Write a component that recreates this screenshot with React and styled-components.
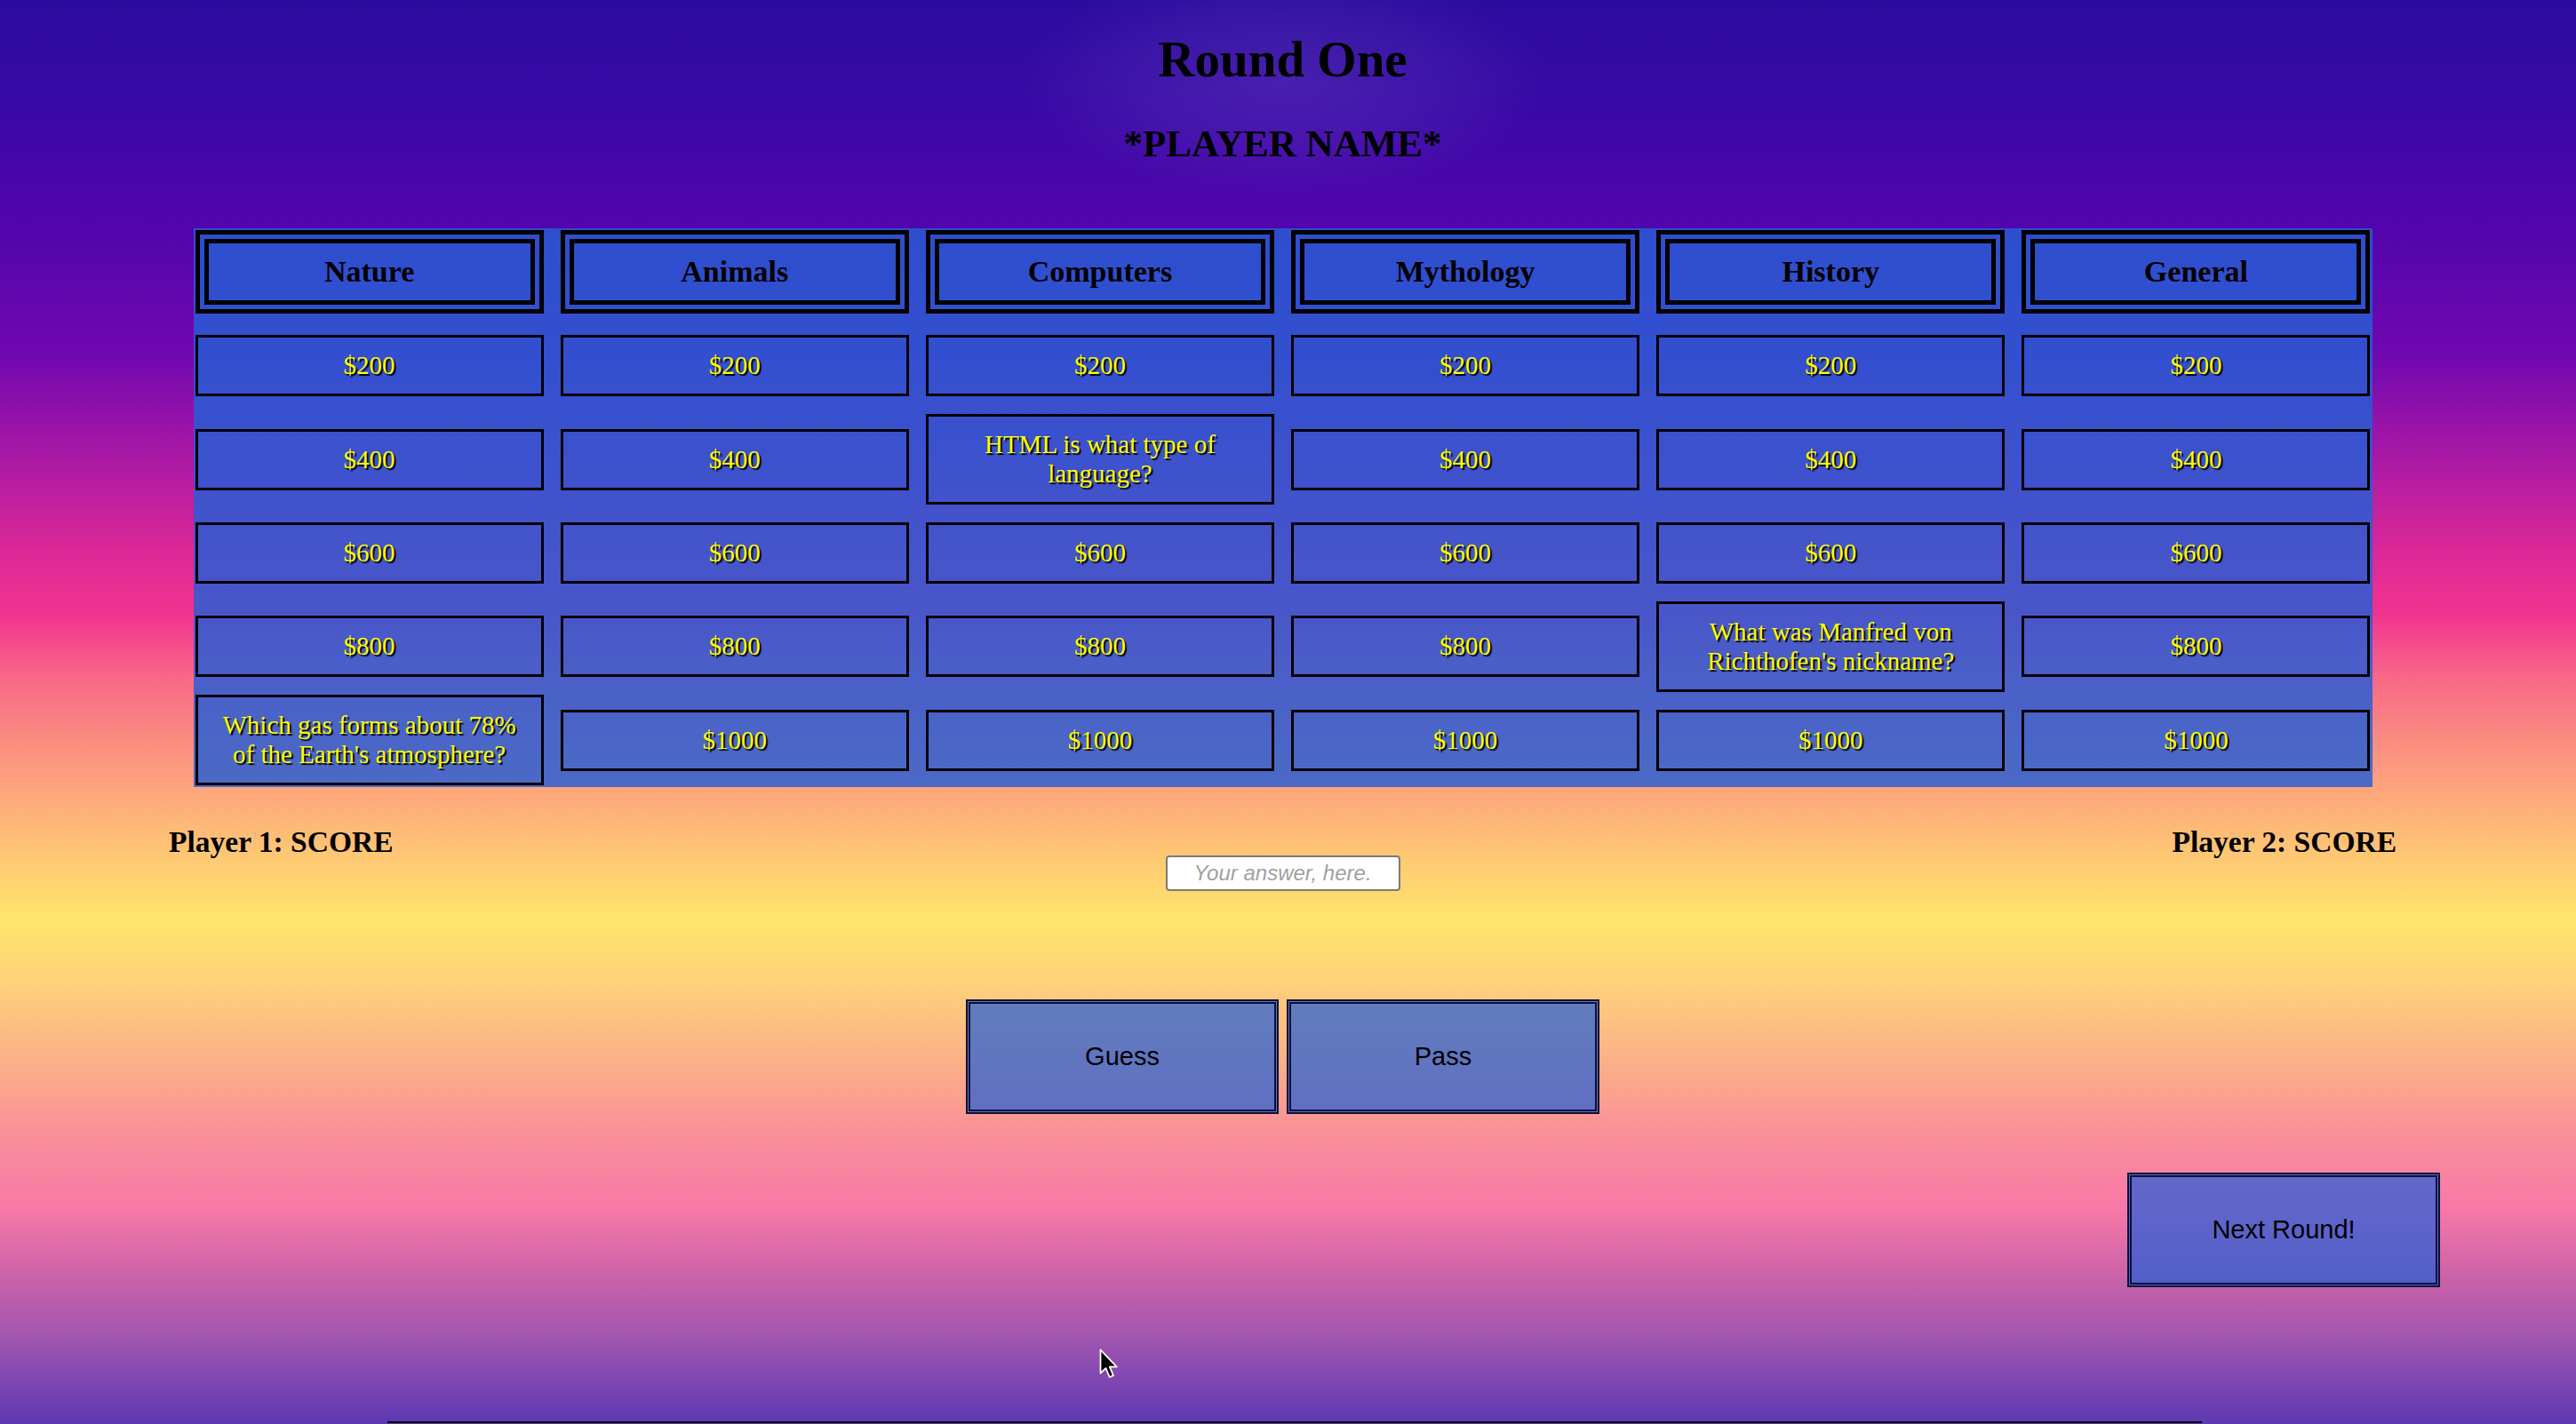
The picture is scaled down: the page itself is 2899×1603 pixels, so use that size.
import React from 'react';
import styled, { createGlobalStyle } from 'styled-components';

const GlobalStyle = createGlobalStyle`
  html, body {
    margin: 0;
    padding: 0;
    overflow: hidden;
  }
  body {
    font-family: "Liberation Serif", "Times New Roman", serif;
  }
`;

const Backdrop = styled.div`
  position: relative;
  width: 100%;
  height: 1603px;
  overflow: hidden;
  background: linear-gradient(
    to bottom,
    #2b0c9f 0px,
    #3a08a8 130px,
    #5305ad 260px,
    #7008b0 400px,
    #b61ca2 540px,
    #dc2898 620px,
    #f2328f 690px,
    #f86688 760px,
    #fa8a80 830px,
    #fda67c 890px,
    #fec674 960px,
    #ffe56c 1035px,
    #fdd07a 1110px,
    #fbae8a 1200px,
    #f98e98 1280px,
    #f878a8 1360px,
    #c862a8 1440px,
    #a557b0 1500px,
    #5d38b3 1603px
  );
`;

const Page = styled.div`
  width: 2887px;
`;

const Header = styled.header`
  box-sizing: border-box;
  height: 257px;
  padding-top: 34px;
  text-align: center;
  background: radial-gradient(
    300px 130px at 50% 92px,
    rgba(255, 255, 255, 0.09) 0%,
    rgba(255, 255, 255, 0.05) 55%,
    rgba(255, 255, 255, 0) 100%
  );
`;

const Title = styled.h1`
  margin: 0;
  font-size: 57px;
  line-height: 66px;
  font-weight: bold;
  color: #000;
`;

const PlayerName = styled.h2`
  margin: 37px 0 0;
  font-size: 43px;
  line-height: 50px;
  font-weight: bold;
  color: #000;
`;

const Board = styled.div`
  box-sizing: border-box;
  width: 2452px;
  margin: 0 auto;
  padding: 0 2px;
  display: grid;
  grid-template-columns: repeat(6, 1fr);
  grid-template-rows: 102px repeat(5, 105.4px);
  column-gap: 19px;
  align-items: center;
  background: rgba(38, 94, 213, 0.83);
`;

const Category = styled.div`
  box-sizing: border-box;
  align-self: start;
  margin-top: 2px;
  height: 94px;
  border: 15px double #000;
  display: flex;
  align-items: center;
  justify-content: center;
  font-size: 34px;
  font-weight: bold;
  color: #000;
`;

const Tile = styled.div`
  border: 3px solid #000;
  padding: 15px 24px;
  font-size: 29px;
  line-height: 33px;
  text-align: center;
  color: #ffff00;
  text-shadow: 2px 2px 1px #000;
`;

const ScoreRow = styled.div`
  margin-top: 42px;
  padding: 0 190px;
  display: flex;
  justify-content: space-between;
  align-items: flex-start;
`;

const Score = styled.div`
  font-size: 33.5px;
  line-height: 39px;
  font-weight: bold;
  color: #000;
`;

const AnswerInput = styled.input`
  box-sizing: border-box;
  margin-top: 35px;
  width: 264px;
  height: 40px;
  border: 2px solid #7a7a7a;
  border-radius: 4px;
  background: #fff;
  font-family: "Liberation Sans", Arial, sans-serif;
  font-size: 24px;
  text-align: center;
  outline: none;
  &::placeholder {
    font-style: italic;
    color: #a0a0a0;
  }
`;

const ActionRow = styled.div`
  margin-top: 122px;
  display: flex;
  justify-content: center;
  gap: 9px;
`;

const NextRow = styled.div`
  margin-top: 66px;
  padding-right: 141px;
  display: flex;
  justify-content: flex-end;
`;

const ActionButton = styled.button`
  box-sizing: border-box;
  width: 352px;
  height: 129px;
  border: 5px double #0c1038;
  background: rgba(38, 94, 213, 0.72);
  font-family: "Liberation Sans", Arial, sans-serif;
  font-size: 29px;
  color: #000;
  padding: 0;
  cursor: pointer;
`;

const FooterRule = styled.div`
  margin-top: 151px;
  margin-left: 436px;
  width: 2042px;
  border-top: 2px solid #000;
`;

const Cursor = styled.svg`
  position: absolute;
  left: 1237px;
  top: 1518px;
  width: 24px;
  height: 36px;
`;

const categories = ['Nature', 'Animals', 'Computers', 'Mythology', 'History', 'General'];
const values = ['$200', '$400', '$600', '$800', '$1000'];
const revealed = {
  'Nature-4': "Which gas forms about 78% of the Earth's atmosphere?",
  'Computers-1': 'HTML is what type of language?',
  'History-3': "What was Manfred von Richthofen's nickname?",
};

export default function App() {
  return (
    <>
      <GlobalStyle />
      <Backdrop>
        <Page>
          <Header>
            <Title>Round One</Title>
            <PlayerName>*PLAYER NAME*</PlayerName>
          </Header>
          <Board>
            {categories.map((c) => (
              <Category key={c}>{c}</Category>
            ))}
            {values.map((v, r) =>
              categories.map((c) => (
                <Tile key={c + r}>{revealed[`${c}-${r}`] || v}</Tile>
              ))
            )}
          </Board>
          <ScoreRow>
            <Score>Player 1: SCORE</Score>
            <AnswerInput placeholder="Your answer, here." />
            <Score>Player 2: SCORE</Score>
          </ScoreRow>
          <ActionRow>
            <ActionButton>Guess</ActionButton>
            <ActionButton>Pass</ActionButton>
          </ActionRow>
          <NextRow>
            <ActionButton>Next Round!</ActionButton>
          </NextRow>
          <FooterRule />
        </Page>
        <Cursor viewBox="0 0 16 24">
          <path
            d="M1 1 L1 18.5 L5 14.8 L7.8 21.5 L10.6 20.3 L7.9 13.8 L13.2 13.8 Z"
            fill="#000"
            stroke="#fff"
            strokeWidth="1.2"
            strokeLinejoin="round"
          />
        </Cursor>
      </Backdrop>
    </>
  );
}
